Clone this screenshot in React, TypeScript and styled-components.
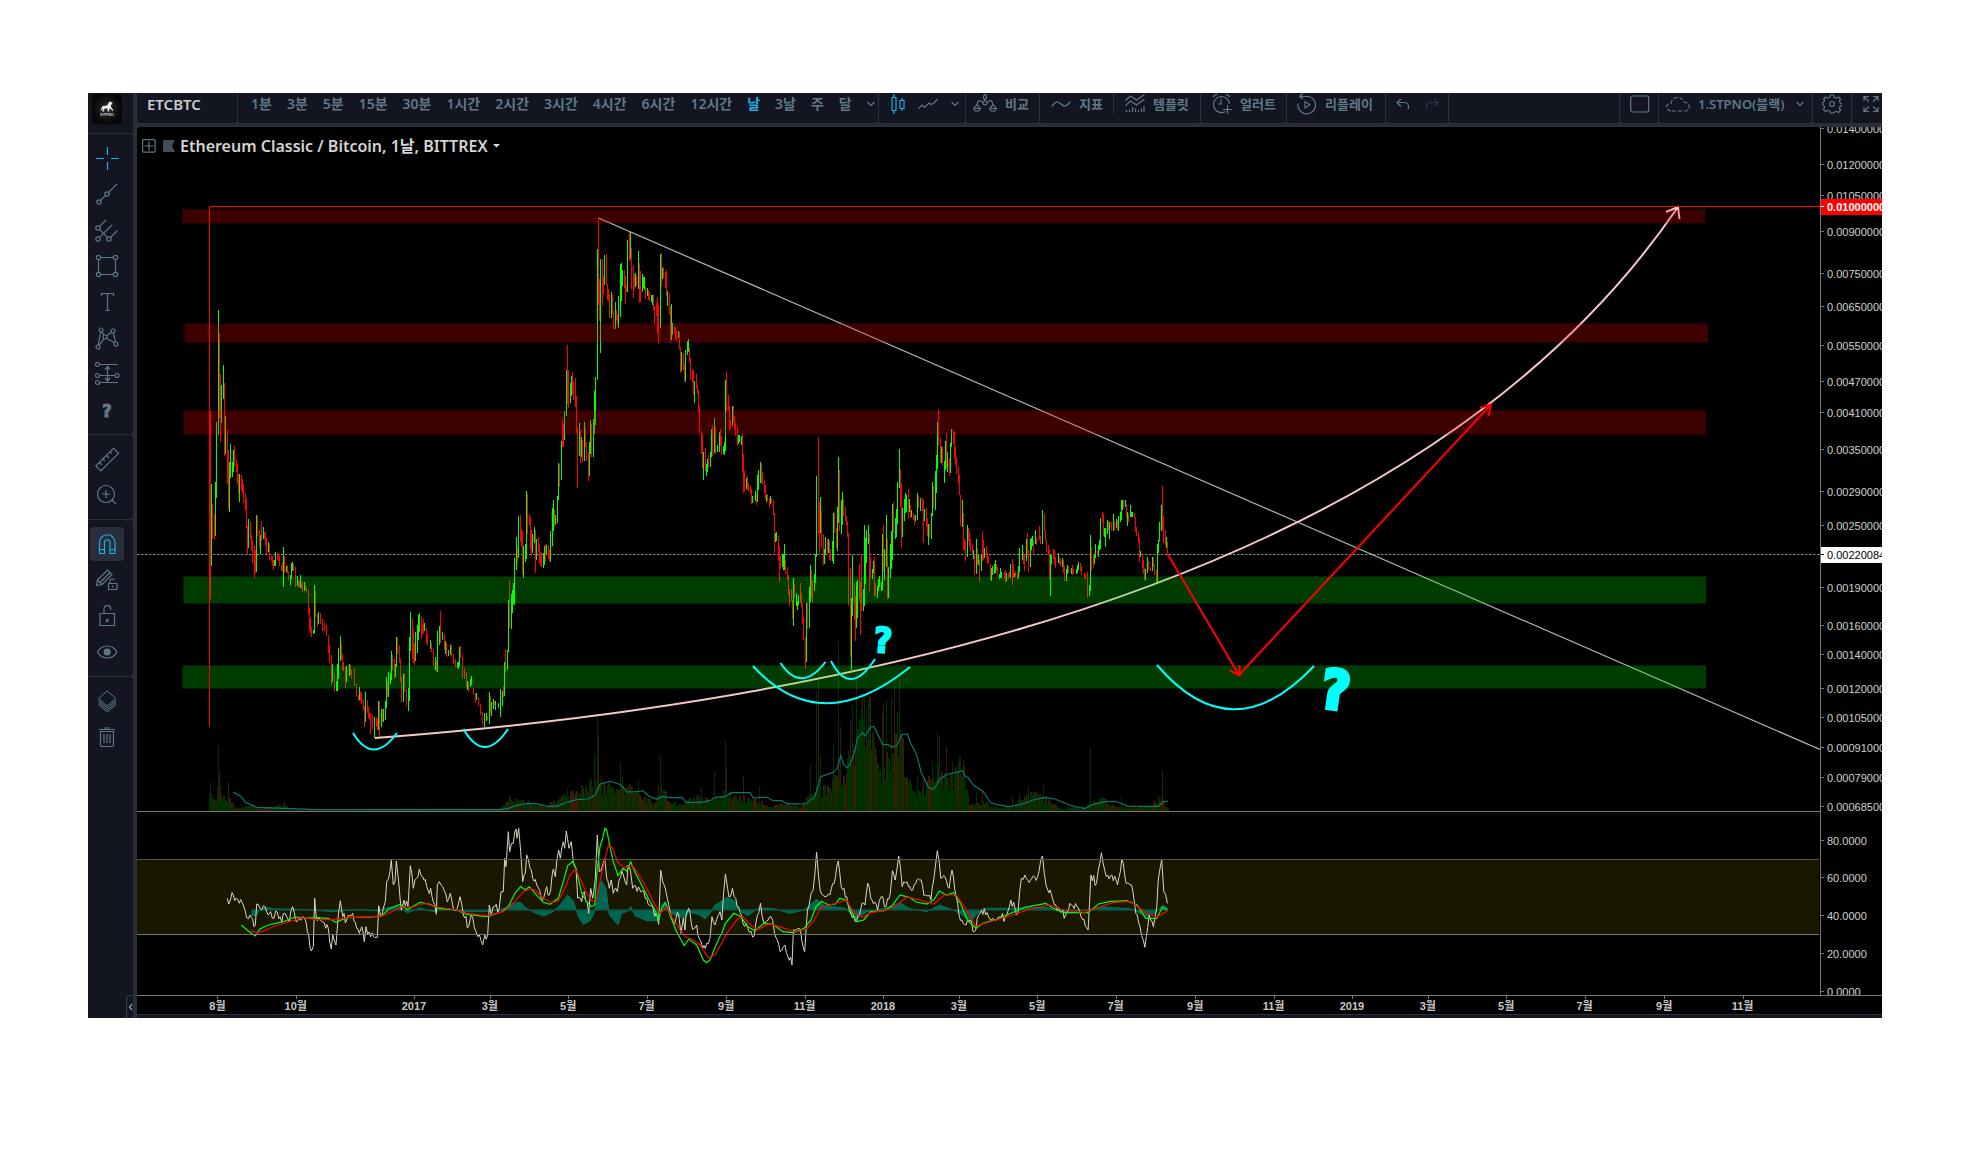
import React from "react";
import styled, { createGlobalStyle } from "styled-components";

const ink = "#5f7888";
const line = "#2a2d3a";
const panel = "#131620";
const accent = "#1caee4";
const uiFont = `"Noto Sans", "Noto Sans CJK KR", sans-serif`;
const axisFont = `"Liberation Sans", "Noto Sans CJK KR", sans-serif`;
const markFont = `"DejaVu Sans Condensed", "DejaVu Sans", sans-serif`;

const GlobalStyle = createGlobalStyle`
  body { margin: 0; background: #fff; font-family: ${uiFont}; }
  *, *::before, *::after { box-sizing: border-box; }
  button, input { font: inherit; color: inherit; border: 0; background: none; padding: 0; margin: 0; }
  button { cursor: pointer; }
`;

const Page = styled.div`
  padding: 93px 89px 151px 88px;
`;

const Terminal = styled.div`
  display: grid;
  grid-template-columns: 45px minmax(0, 1fr);
  column-gap: 4px;
  background: ${line};
  overflow: hidden;
`;

const Sidebar = styled.nav`
  display: flex;
  flex-direction: column;
  gap: 1px;
  color: ${ink};
`;

const ToolSection = styled.div<{ $grow?: boolean }>`
  background: ${panel};
  border-radius: 0 3px 3px 0;
  padding: 6px 9px 6px 2px;
  display: flex;
  flex-direction: column;
  align-items: center;
  flex: ${(p) => (p.$grow ? "1" : "none")};
`;

const LogoSection = styled.div`
  background: ${panel};
  height: 40px;
  padding: 1px 4px;
`;

const ToolButton = styled.button<{ $on?: boolean }>`
  width: 34px;
  height: 34px;
  margin: 1px 0;
  border-radius: 4px;
  display: grid;
  place-items: center;
  background: ${(p) => (p.$on ? line : "none")};
  color: ${(p) => (p.$on ? accent : "inherit")};
  font-family: ${markFont};
  font-size: 18px;
  font-weight: 700;
  -webkit-text-stroke: 1px currentColor;
`;

const CollapseRow = styled.div`
  margin: auto -9px 0 0;
  align-self: flex-end;
`;

const CollapseButton = styled.button`
  display: block;
  width: 7px;
  height: 23px;
  border: 1px solid #3a3f4e;
  border-right: 0;
  border-bottom: 0;
  border-radius: 4px 0 0 0;
  color: #8fa3b0;
  line-height: 0;
  margin-bottom: -6px;
`;

const Main = styled.div`
  min-width: 0;
`;

const Toolbar = styled.div`
  display: flex;
  gap: 1px;
  height: 30px;
  margin-bottom: 4px;
  color: ${ink};
  font-size: 14px;
  font-weight: 600;
  line-height: 20px;
`;

const Group = styled.div<{ $width?: number; $gap?: number; $left?: number; $small?: boolean }>`
  flex: ${(p) => (p.$width ? `0 0 ${p.$width}px` : "1")};
  min-width: 0;
  display: flex;
  align-items: center;
  gap: ${(p) => p.$gap ?? 8}px;
  padding: 0 0 9px ${(p) => p.$left ?? 11}px;
  background: ${panel};
  border-radius: 0 0 3px 3px;
  overflow: hidden;
  font-size: ${(p) => (p.$small ? 13 : 14)}px;
`;

const BarButton = styled.button<{ $on?: boolean; $faint?: boolean }>`
  flex: none;
  display: flex;
  align-items: center;
  gap: 8px;
  white-space: nowrap;
  color: ${(p) => (p.$on ? accent : p.$faint ? "#2f3745" : "inherit")};
`;

const Rule = styled.span`
  align-self: stretch;
  width: 1px;
  margin: 0 3px 0 2px;
  background: ${line};
`;

const Symbol = styled.input`
  width: 80px;
  font-size: 15px;
  font-weight: 600;
  color: #c8ccd0;
  outline: 0;
`;

const Chart = styled.section`
  background: #000;
  border-radius: 4px 0 0 0;
  overflow: hidden;
  position: relative;
  display: grid;
  grid-template-columns: minmax(0, 1fr) 62px;
  grid-template-rows: 684px 184px 19px;
`;

const Footer = styled.div`
  height: 3px;
  margin-top: 1px;
  background: ${panel};
`;

const Legend = styled.header`
  position: absolute;
  left: 5px;
  top: 7px;
  display: flex;
  align-items: center;
  gap: 5px;
  color: ${ink};
`;

const Title = styled.h1`
  margin: 0;
  font-size: 16px;
  font-weight: 600;
  line-height: 24px;
  color: #d4d4d4;
`;

const Pane = styled.svg`
  display: block;
  width: 100%;
  height: 100%;
`;

const Scale = styled.div`
  position: relative;
  overflow: hidden;
  border-left: 1px solid #777;
  font: 11px/16px ${axisFont};
  color: #d0d0d0;
`;

const Tick = styled.span<{ $fill?: string; $text?: string }>`
  position: absolute;
  left: 0;
  width: 100px;
  height: 16px;
  margin-top: -8px;
  padding-left: 6px;
  white-space: nowrap;
  background: ${(p) => p.$fill ?? "none"};
  color: ${(p) => p.$text ?? "inherit"};
  font-weight: ${(p) => (p.$text === "#fff" ? 700 : 400)};
  &::before {
    content: "";
    position: absolute;
    left: 0;
    top: 7px;
    width: 3px;
    height: 1px;
    background: ${(p) => p.$text ?? "#777"};
  }
`;

const TimeScale = styled.div`
  position: relative;
  overflow: hidden;
  border-top: 1px solid #777;
  font: 700 11px/16px ${axisFont};
  color: #c8c8c8;
`;

const TimeTick = styled.span`
  position: absolute;
  top: 2px;
  width: 60px;
  margin-left: -30px;
  text-align: center;
  &::before {
    content: "";
    position: absolute;
    left: 30px;
    top: -2px;
    width: 1px;
    height: 3px;
    background: #777;
  }
`;

const Corner = styled.div`
  border-top: 1px solid #777;
`;

/* ---------- icons ---------- */

type IconProps = { w?: number; h?: number; children: React.ReactNode };
const Icon = ({ w = 24, h = 24, children }: IconProps) => (
  <svg width={w} height={h} viewBox={`0 0 ${w} ${h}`} fill="none" stroke="currentColor" strokeWidth="1.2" aria-hidden="true">
    {children}
  </svg>
);
const Chevron = () => (
  <Icon w={8} h={6}><path d="M.5 1 4 4.5 7.500 1" /></Icon>
);

const Logo = () => (
  <svg width="30" height="30" viewBox="0 0 30 30" role="img" aria-label="STPNO" display="block">
    <defs>
      <radialGradient id="glow"><stop offset="0" stopColor="#2c2c2c" /><stop offset="1" stopColor="#060606" /></radialGradient>
    </defs>
    <rect width="30" height="30" rx="3" fill="url(#glow)" />
    <path d="M8.500 17.500 9.500 13.500 11 12 15 11.500 17.500 7.500 20.500 8.500 20 10.500 18.700 10.800 19.300 13.500 21 15.500 20.500 17.500 19.500 15.500 17.500 14.500 17 17.500 15.700 17.500 15.500 14.500 12.500 14.500 12 17.500 10.500 17.500 10.800 14Z" fill="#eee" />
    <text x="15" y="22" textAnchor="middle" fontFamily="Liberation Sans" fontWeight="700" fontSize="4" fill="#ccc">STPNO</text>
  </svg>
);

const tools: { name: string; art: React.ReactNode }[][] = [
  [
    { name: "Crosshair", art: <g stroke={accent}><path d="M12.500 1v8M12.500 16v8M1 12.500h8M16 12.500h8" /></g> },
    { name: "Trend line", art: <><circle cx="4" cy="20" r="2.200" /><circle cx="12" cy="12" r="2.200" /><path d="M5.600 18.400 10.400 13.600M13.600 10.400 22 2" /></> },
    { name: "Pitchfork", art: <><circle cx="3" cy="10" r="2.200" /><circle cx="3" cy="21" r="2.200" /><circle cx="14" cy="21" r="2.200" /><path d="M4.600 8.400 11 2M4.600 19.400 17 7M15.600 19.400 22.500 12.500M4.600 11.600 12.400 19.400" /></> },
    { name: "Shapes", art: <><circle cx="3.500" cy="3.500" r="2.200" /><circle cx="20.500" cy="3.500" r="2.200" /><circle cx="3.500" cy="20.500" r="2.200" /><circle cx="20.500" cy="20.500" r="2.200" /><path d="M5.700 3.500h12.600M5.700 20.500h12.600M3.500 5.700v12.600M20.500 5.700v12.600" /></> },
    { name: "Text", art: <path d="M6.500 6V3.500h12V6M12.500 3.500v17M10 20.500h5" /> },
    { name: "Patterns", art: <><circle cx="6" cy="4" r="2" /><circle cx="18" cy="5" r="2" /><circle cx="10" cy="11" r="2" /><circle cx="3" cy="21" r="2" /><circle cx="21" cy="18" r="2" /><path d="M5.700 6 3.300 19M7 5.800 9.300 9.300M11.600 9.700 16.500 6.300M18.300 7 20.600 16M11.500 12.300 19.500 16.800M9 12.800 4.200 19.300" /></> },
    { name: "Forecast", art: <><circle cx="2.500" cy="2.500" r="2" /><circle cx="2.500" cy="13.500" r="2" /><circle cx="22" cy="13.500" r="2" /><circle cx="2.500" cy="20.500" r="2" /><path d="M4.500 2.500H23M4.500 13.500H20M4.500 20.500H23M12.500 5v13M10 7.500l2.500-3 2.500 3M10 16l2.500 3 2.500-3" /></> },
    { name: "Icons", art: null },
  ],
  [
    { name: "Measure", art: <path d="M.8 19 18.500 1.300l5 5L5.800 24ZM4.500 15.500l2.500 2.500M8 12l1.800 1.800M11.500 8.500 14 11M15 5l1.800 1.800" /> },
    { name: "Zoom", art: <><circle cx="11" cy="11" r="8.500" /><path d="M11 7v8M7 11h8M17 17l4 4" /></> },
  ],
  [
    { name: "Magnet", art: <><path d="M4.500 21.500V10.500a7.700 7.700 0 0 1 15.500 0v11h-5V10.500a2.700 2.700 0 0 0-5.500 0v11Z" /><path d="M4.500 17.500h5M15 17.500h5" /></> },
    { name: "Lock drawing mode", art: <><path d="M1.500 17.500 2.500 12 12.500 2l4.500 4.500-10 10ZM2.500 12l4.500 4.500M5 14.500l10-10" /><path d="M13.500 15.500h8.500v6h-8.500ZM15 15.500v-2.500a2.300 2.300 0 0 1 4.500-.6M17.700 17.500v2" /></> },
    { name: "Lock all", art: <><path d="M5 9.500h14.500v12H5ZM9 9.500V5a3.400 3.400 0 0 1 6.800 0v1" /><path d="M12.200 15v3" strokeWidth="2.500" /></> },
    { name: "Hide all", art: <><path d="M2.500 12C7 4 17.500 4 22 12 17.500 20 7 20 2.500 12Z" /><circle cx="12.200" cy="12" r="3" fill="currentColor" /></> },
  ],
  [
    { name: "Object tree", art: <path d="M12.200 2 21 9.500l-8.800 7.500L3.500 9.500ZM3.500 11.500l8.700 7.500L21 11.500M3.500 13.500l8.700 7.500L21 13.500M3.500 15.500l8.700 7.500L21 15.500" strokeWidth="1" /> },
    { name: "Remove", art: <path d="M4 4.500h16M9 3h6M5.500 6.500h13v13.500q0 1.500-1.500 1.500H7q-1.500 0-1.500-1.500ZM9 9v9M12 9v9M15 9v9" /> },
  ],
];

const intervals = ["1분", "3분", "5분", "15분", "30분", "1시간", "2시간", "3시간", "4시간", "6시간", "12시간", "날", "3날", "주", "달"];

/* ---------- chart geometry: the drawing space starts at (137, 127) ---------- */

const LEFT = 137;
const WIDTH = 1683;
const priceY = (price: number) => 165 - 234.8 * Math.log((price + 0.0001) / 0.0121) - 127;
const rsiY = (value: number) => 991.6 - 1.8875 * value - 811;
const timeX = (y: number, m: number) => {
  const days = (Date.UTC(y, m - 1, 1) - Date.UTC(2017, 0, 1)) / 86400000;
  return ((414 + days * 1.2849 - LEFT) / WIDTH) * 100;
};

const prices = [0.014, 0.012, 0.0105, 0.009, 0.0075, 0.0065, 0.0055, 0.0047, 0.0041, 0.0035, 0.0029, 0.0025, 0.0019, 0.0016, 0.0014, 0.0012, 0.00105, 0.00091, 0.00079, 0.000685];
const months: [number, number][] = [[2016, 8], [2016, 10], [2017, 1], [2017, 3], [2017, 5], [2017, 7], [2017, 9], [2017, 11], [2018, 1], [2018, 3], [2018, 5], [2018, 7], [2018, 9], [2018, 11], [2019, 1], [2019, 3], [2019, 5], [2019, 7], [2019, 9], [2019, 11]];

const barsA = `r82 590 1000,r85 590 1117,g88 795 1025,r91 851 948,r96 878 952,g99 790 941,g102 622 834,g107 308 658,r110 372 610,r113 487 678,g116 518 624,g121 462 557,r124 512 717,g127 604 711,r132 644 795,r135 700 865,g138 734 874,g141 683 778,g147 734 776,g150 700 762,r153 689 748,r158 725 762,r161 739 795,r164 767 823,g167 767 846,r172 770 815,r175 781 820,r178 795 848,r183 820 867,r186 834 918,r189 912 991,g192 893 974,r197 899 949,r200 938 980,r203 952 1016,r208 966 1057,r211 980 1044,g214 882 1042,r217 885 941,r222 924 975,g225 938 991,r228 899 955,g234 916 949,r237 930 948,r239 930 969,r242 947 991,g248 958 985,r251 963 1008,r256 997 1010,r259 997 1025,r262 1008 1036,g264 1008 1025,g267 986 1025,r273 988 1008,r276 988 1010,r278 997 1025,r284 1022 1038,r287 1014 1040,g290 972 1083,r293 997 1044,g298 1025 1041,r301 1022 1047,r304 1038 1063,g309 1050 1078,g312 1016 1061,g315 1014 1040,r318 1019 1039,r324 1028 1083,g329 1053 1080,r332 1067 1083,r334 1064 1083,g337 1050 1086,r340 1072 1089,r343 1067 1097,g348 1069 1095,r351 1078 1092,r354 1083 1100,r360 1092 1158,r363 1142 1204,r366 1170 1212,r368 1195 1223,g373 1205 1215,g376 1078 1212,r379 1095 1167,r385 1159 1195,g388 1154 1187,r393 1156 1187,r399 1173 1207,r404 1184 1207,r410 1190 1221,r415 1217 1268,r418 1246 1296,r424 1274 1358,g427 1299 1350,r432 1324 1378,g438 1347 1375,g441 1299 1374,g443 1254 1341,g449 1221 1291,r452 1240 1288,r455 1272 1316,r457 1294 1319,r463 1308 1366,g466 1305 1350,g474 1299 1333,r477 1302 1330,r480 1316 1341,r488 1310 1361,r494 1355 1392,r499 1386 1403,g502 1364 1400,r505 1375 1403,r508 1380 1411,r513 1397 1428,r516 1417 1476,g519 1378 1462,r525 1400 1437,r527 1420 1450,r530 1437 1456,r533 1436 1495,r539 1442 1481,g544 1448 1507,r550 1448 1476,r553 1453 1484,g556 1403 1484,r558 1403 1507,g564 1425 1476,r567 1425 1462,g570 1425 1462,g575 1403 1456,g578 1336 1422,r581 1347 1392,g584 1322 1392,g589 1324 1355,g592 1263 1344,r595 1274 1316,r600 1285 1341,g603 1299 1336,g606 1224 1308,r609 1224 1272,r614 1246 1296,r617 1285 1350,r620 1336 1406,g626 1327 1406,r629 1324 1378,r634 1370 1417,g640 1366 1431,g642 1224 1403,g645 1154 1263,r651 1173 1285,r654 1201 1296,r656 1240 1302,g659 1210 1291,g665 1190 1268,g668 1162 1232,g670 1156 1210,r676 1165 1229,r679 1187 1217,r682 1173 1212,g685 1184 1207,r690 1198 1240,r693 1215 1246,g701 1232 1257,r704 1240 1266,r710 1257 1305,g715 1280 1316,r718 1288 1322,g721 1207 1322,g726 1193 1246,r729 1151 1240,g735 1210 1232,r740 1215 1260,g743 1235 1270,r746 1240 1280,g751 1260 1277,g757 1246 1274,r760 1243 1280,r765 1270 1299,r771 1285 1308,g777 1294 1310,g780 1294 1313,g782 1252 1305,r785 1249 1282,r791 1274 1338,r796 1310 1341,r802 1322 1364,g805 1347 1372,r808 1350 1378,g813 1341 1364,g816 1333 1358,r822 1366 1386,r827 1380 1408,g830 1380 1400,r836 1392 1417,r841 1411 1442,r847 1434 1470,g853 1436 1476,g858 1437 1458,r861 1444 1456,g867 1378 1467,r870 1389 1437,g872 1406 1445,g878 1397 1425,r881 1403 1414,g884 1403 1428,g892 1408 1422,g898 1369 1448,g903 1375 1417,r906 1361 1392,g909 1294 1389,r912 1257 1322,g917 1260 1316,g920 1120 1266,r922 1064 1198,g928 1103 1201,g931 1092 1156,g934 1072 1131,g937 1002 1134,g943 944 1036,r946 972 1016,g948 885 1002,r954 882 958,r957 921 972,r959 927 1050,g962 969 1058,g968 963 1013,g970 815 1005,r973 823 935,r979 879 910,r982 888 980,r985 924 997,g987 935 988,g993 916 960,r996 924 1044,g999 950 1008,r1004 944 985,r1007 963 1016,r1010 986 1025,r1013 988 1027,g1018 988 1030,g1021 969 1022,r1024 963 1010,g1027 966 991,r1032 966 1005,r1035 980 1010,g1038 927 1014,g1043 862 969,g1046 840 927,r1049 865 916,g1052 882 910,g1057 829 904,g1060 736 840,r1063 739 804,g1069 675 784,r1071 613 692,r1074 627 692,g1077 590 672,g1083 476 605,r1085 406 571,r1088 476 582,g1094 512 568,g1096 493 549,r1099 482 543,r1102 510 560,r1107 498 580,r1110 549 652,r1113 638 806,g1119 624 717,r1122 644 736,g1124 664 720,r1127 672 734,g1132 622 731,r1135 638 692,r1138 678 731,r1144 706 787,g1147 678 773,g1150 616 711,r1153 627 720,g1158 613 720,g1161 535 655,g1164 496 630,g1169 137 504,r1172 50 294,r1174 221 339,g1177 165 428,r1183 165 294,r1186 212 263,g1189 154 238,r1194 151 238,r1197 235 280,r1200 249 283,r1203 263 330,g1208 258 330,r1211 266 319,r1214 311 361,g1219 286 361,r1222 308 336,r1225 322 350,g1228 269 358,g1233 179 328,g1236 176 283,g1239 196 241,r1245 196 246,r1248 212 291,r1250 238 258,g1253 112 258,r1259 90 171,g1262 90 165,r1264 134 249,r1270 182 274,r1273 207 249,g1276 204 244,r1278 212 241,g1284 143 249,r1287 176 288,r1290 199 286,g1295 207 258,g1298 215 246,g1300 216 252,r1304 241 277,g1309 246 269,r1312 252 280,r1315 258 283,g1320 266 286,g1323 266 294,r1326 266 308,r1329 297 347,r1334 288 325,r1337 272 372,r1340 294 400,g1345 151 358,r1348 148 244,g1351 190 221,r1354 188 218,r1360 202 246,r1362 196 269,g1365 255 297,r1371 260 322,r1374 297 400,g1377 291 392,g1379 344 378,r1385 353 372,r1388 358 389,r1391 367 395,g1396 367 386,r1399 370 417,r1402 412 484,g1405 425 479,r1410 428 476,r1413 459 507,g1416 420 510,g1421 395 434,g1424 389 426,r1427 414 454,r1430 442 504,r1435 473 510,r1438 479 546,g1441 507 568,r1446 487 526,r1449 518 543,r1452 532 594,r1455 577 652,r1460 647 711,r1463 655 750,g1466 706 784,r1472 694 759,g1474 739 773,g1477 725 762,r1480 714 750,g1486 706 748,g1489 641 720,r1491 630 717,g1497 610 708,r1500 636 711,g1505 686 706,g1511 650 706,r1514 641 689,r1517 661 714,g1522 689 711,g1525 678 714,g1528 504 703,r1531 482 594,r1536 546 588,r1539 577 644,r1542 616 641,g1547 577 633,r1550 577 622,r1553 605 641,r1556 624 661,r1561 636 689,g1565 658 683`;

const barsB = `r112 230 288,g115 255 283,g118 255 277,g124 258 285,r127 252 366,r130 312 430,r133 363 424,g139 384 418,r142 378 421,r145 399 423,r151 408 432,r154 418 462,g157 438 459,g166 423 453,r169 432 465,g172 375 456,g175 360 420,g181 336 400,r184 342 403,r187 366 403,r193 393 430,r196 405 447,g199 435 456,r202 432 454,r208 444 474,g211 438 462,r214 444 460,r220 450 495,r223 489 609,g226 549 576,g229 546 573,r235 558 630,r238 591 696,r241 618 656,g247 612 651,g250 612 660,g253 582 660,r256 630 672,r262 651 690,r265 675 736,r268 717 768,r274 718 754,r277 750 807,g280 684 828,r283 702 745,g289 729 768,g292 753 780,g295 735 765,r301 699 760,r304 730 771,r307 759 822,r310 800 870,r316 861 957,g319 759 936,r322 757 837,g328 711 834,g331 645 757,r334 660 745,r337 690 759,g343 672 723,g346 612 699,g349 378 621,r355 261 555,r358 456 612,g361 441 549,r364 483 594,r370 552 645,g373 597 642,g376 561 612,r382 567 608,g385 567 609,r388 573 631,r391 597 634,g397 573 633,g400 489 642,r403 486 550,r409 534 594,g412 471 603,g415 321 519,r418 360 543,g424 450 552,g427 426 525,r430 447 498,r436 471 514,r439 498 526,r442 516 561,r445 549 768,r451 654 921,g454 744 960,g457 615 798,r463 699 810,r466 738 873,g469 696 834,g472 690 804,r478 642 748,r481 696 855,r484 612 784,g490 717 783,g493 525 768,g496 564 702,g499 540 640,g505 525 582,r508 552 723,r511 621 684,g517 657 687,g520 633 669,r523 621 738,r526 699 737,g532 708 744,g535 687 723,g538 678 711,g544 696 723,g547 552 720,r550 525 666,g553 597 690,g559 495 652,r562 567 747,g565 651 744,g571 582 684,g574 543 657,g577 462 631,r580 456 546,g586 504 567,g589 477 561,g592 396 522,g598 297 414,r601 357 471,r604 402 594,g607 474 561,g613 447 513,g616 429 489,g619 435 486,r625 417 508,g628 447 486,r631 466 504,g634 480 501,r640 489 510,r643 495 526,g646 496 513,g652 429 510,r655 438 474,g661 444 484,r667 444 484,r670 450 579,g673 477 513,r679 474 531,r682 504 558,g685 522 585,r688 522 562,g694 489 567,g697 396 498,r700 408 474,g706 363 480,g709 315 430,g712 216 357,r715 180 285,r721 264 340,g724 291 339,r727 288 345,g733 333 399,g736 273 361,r739 249 354,g742 306 366,r748 324 378,g751 279 369,g754 237 291,r760 240 282,r763 246 324,r766 291 345,r769 321 372,r775 348 399,r778 375 436,r781 435 528,g787 450 531,r790 489 600,r793 567 600,r796 573 633,g802 525 621,r805 534 572,r808 543 590,r811 567 606,r817 582 616,g820 600 627,r823 612 675,g829 567 672,r832 594 646,g835 612 645,r838 630 696,g844 612 662,r847 543 633,r850 570 630,g853 594 624,r859 588 621,r862 609 640,r865 621 642,r871 642 690,g874 654 693,g877 648 676,g883 642 672,g886 630 669,r889 642 663,r892 651 682,g898 672 687,g901 654 684,g904 666 684,r913 666 687,r916 660 699,g919 669 693,r925 669 687,r928 666 681,g931 642 684,r937 627 705,r940 642 684,g943 669 681,r946 663 681,r952 666 690,g955 648 684,g958 594 667,g967 585 630,r970 606 642,r973 612 663,g979 567 633,r982 549 621,r985 600 666,g991 567 651,g994 564 600,g997 558 589,r1000 570 612,g1006 540 583,r1009 564 586,r1018 528 570,r1021 558 582,g1027 480 582,r1033 492 543,r1036 540 573,r1039 570 606,r1045 586 615,r1048 600 690,g1051 612 738,g1054 615 642,r1060 597 627,r1063 600 645,r1066 621 655,g1075 609 640,r1078 621 642,r1081 627 648,g1087 624 651,r1090 630 669,r1093 648 693,g1099 657 693,g1102 645 672,r1105 648 670,g1114 654 672,r1117 645 675,r1120 657 673,g1129 657 672,g1132 645 669,g1135 636 660,r1141 639 664,r1144 648 676,r1153 669 684,r1156 672 687,r1162 666 744,g1168 705 738,g1171 555 723,r1174 591 664,r1180 612 655,g1183 615 642,g1186 582 624,r1192 600 615,g1195 585 621,g1198 570 600,g1201 504 598,r1207 486 516,r1210 492 558,g1213 534 561,g1216 534 591,g1222 510 552,r1225 513 540,g1228 516 567,r1234 516 543,g1240 492 543,r1243 513 540,g1249 507 534,r1252 510 540,g1255 498 543,g1261 486 516,g1264 450 510,g1267 450 480,r1270 450 474,g1276 450 472,r1279 462 504,g1282 486 528,r1285 492 515,g1291 465 501,g1294 486 500,g1297 486 502,r1303 489 504,r1306 501 546,r1309 531 558,r1315 546 580,r1318 564 636,g1321 603 621,r1327 612 654,r1330 630 672,r1333 654 693,g1336 657 690,g1342 621 669,r1345 633 660,r1351 651 663,g1357 621 663,r1360 621 650,r1363 642 675,r1369 660 698,g1372 582 696,g1375 570 609,g1378 516 573,g1384 465 544,r1387 408 540,r1390 498 579,r1396 540 585,g1399 561 594,r1402 576 612`;

type Frame = [ox: number, oy: number, sx: number, sy: number];
const frameA: Frame = [180, 200, 2.8, 2.8];
const frameB: Frame = [700, 350, 3, 3];
const frameC: Frame = [200, 735, 3, 3];
const frameD: Frame = [120, 800, 1.4255, 3];

const barPath = (kind: string) =>
  ([[barsA, frameA], [barsB, frameB]] as [string, Frame][])
    .map(([src, [ox, oy, sx, sy]]) =>
      src.split(",").filter((b) => b[0] === kind).map((b) => {
        const [x, t, d] = b.slice(1).split(" ").map(Number);
        return `M${Math.floor(ox + x / sx)} ${Math.round(oy + t / sy)}h1V${Math.round(oy + d / sy)}h-1Z`;
      }).join(""),
    ).join("");

type Point = [number, number];
const points = (src: string, [ox, oy, sx, sy]: Frame): Point[] =>
  src.trim().split(" ").map((p) => {
    const [x, y] = p.split(",").map(Number);
    return [ox + x / sx, oy + y / sy];
  });
const join = (list: Point[]) => list.map(([x, y]) => `${x.toFixed(1)},${y.toFixed(1)}`).join(" ");

/* small repeatable wobble, so that a sparse series keeps its daily texture */
const noise = (n: number) => {
  const v = Math.sin(n * 127.1 + 11.7) * 43758.5453;
  return v - Math.floor(v);
};
const roughen = (list: Point[], amount: number): Point[] => {
  const out: Point[] = [];
  list.forEach(([x, y], i) => {
    out.push([x, y]);
    const next = list[i + 1];
    if (!next) return;
    const steps = Math.floor((next[0] - x) / 1.285);
    for (let k = 1; k < steps; k++) {
      const t = k / steps;
      out.push([x + (next[0] - x) * t, y + (next[1] - y) * t + (noise(x + k) - 0.5) * amount]);
    }
  });
  return out;
};

const volumeAverage = [
  ...points("100,172 124,185 136,202 170,217 250,220 330,223 600,224 900,224 925,220 950,212 985,205 1010,206 1040,214 1070,214 1100,202 1130,194 1165,192 1185,180 1200,148 1230,139 1262,149 1280,171 1305,170 1330,168 1345,182 1370,193 1385,185 1410,188 1445,187 1460,202 1498,202", frameC),
  ...points("0,1357 30,1352 45,1342 75,1340 95,1328 150,1328 160,1344 200,1342 220,1352 245,1352 260,1361 318,1362 345,1340 362,1280 400,1267 412,1255 422,1217 432,1245 442,1253 452,1240 465,1200 472,1165 488,1148 495,1158 512,1130 522,1130 548,1184 565,1184 575,1192 590,1187 605,1154 622,1152 632,1180 650,1215 663,1265 685,1312 700,1318 712,1302 720,1286 745,1272 765,1268 787,1262 795,1278 805,1284 820,1305 850,1325 873,1360 925,1370 960,1364 1000,1350 1035,1342 1065,1347 1110,1366 1155,1376 1175,1364 1215,1355 1245,1354 1285,1369 1375,1369 1392,1354 1404,1354", frameB),
];

const rsi = roughen([
  ...points("82,490 86,507 92,492 100,480 108,490 118,505 130,510 140,548 150,540 166,570 170,507 180,520 195,515 205,540 212,530 222,550 232,532 245,560 255,535 268,560 278,515 288,560 300,555 318,560 334,648 340,635 344,490 348,540 365,560 385,580 394,642 398,598 408,630 415,540 421,497 428,545 440,555 458,535 470,580 478,595 485,575 493,620 498,575 512,605 532,607 536,512 542,545 550,520 556,500 560,440 566,430 574,376 580,450 585,440 589,378 596,440 604,525 612,495 624,515 631,392 640,460 650,430 658,402 668,425 684,465 692,460 700,500 709,538 712,450 718,440 728,455 742,500 751,475 760,520 772,520 780,485 790,540 806,575 814,540 828,590 838,598 848,630 854,600 863,600 868,510 874,540 884,515 898,520 903,470 910,470 914,370 918,395 925,290 929,350 940,325 948,282 951,310 956,280 962,350 968,440 976,415 980,360 990,400 998,430 1010,450 1024,492 1040,455 1048,480 1060,402 1066,425 1076,345 1081,370 1090,320 1094,340 1099,288 1107,340 1114,320 1120,380 1128,400 1133,490 1145,500 1153,470 1166,535 1172,460 1178,490 1186,430 1192,300 1198,410 1208,390 1214,370 1220,430 1228,460 1234,435 1240,475 1252,470 1262,425 1270,420 1280,450 1284,390 1291,405 1298,460 1320,465 1340,490 1356,510 1376,568 1382,405 1388,440 1396,460 1402,490 1410,530 1420,560 1436,540 1443,595 1450,550 1455,585 1458,540 1466,520 1474,565 1482,580 1490,570 1498,610 1508,640 1520,625 1530,610 1536,545 1545,570 1560,530", frameC),
  ...points("858,360 863,222 868,290 873,265 880,320 888,370 895,385 904,408 913,310 918,370 928,350 933,400 941,455 948,435 958,495 960,390 968,385 976,455 980,330 985,280 988,270 993,157 998,270 1005,290 1012,285 1020,230 1024,183 1028,260 1036,290 1042,340 1048,365 1056,325 1062,315 1066,250 1072,300 1080,330 1085,290 1092,320 1098,280 1101,212 1105,240 1110,168 1115,260 1122,245 1130,270 1140,240 1148,285 1156,300 1160,240 1165,152 1170,235 1176,230 1182,265 1186,210 1190,270 1196,345 1206,375 1212,360 1218,395 1228,330 1238,350 1250,360 1262,350 1270,300 1280,340 1285,235 1290,225 1298,240 1308,230 1315,168 1320,255 1330,300 1340,335 1348,345 1354,310 1364,320 1380,390 1384,225 1392,250 1399,158 1406,230 1414,225 1422,255 1428,178 1434,250 1442,255 1448,340 1454,380 1461,442 1467,345 1473,380 1478,320 1480,240 1485,180 1488,275 1493,310", frameD),
], 9);

const fast = [
  ...points("124,570 145,588 166,603 180,582 205,570 250,560 285,546 320,549 345,548 385,550 408,562 440,548 520,546 545,542 570,520 602,508 622,524 660,502 690,508 715,520 770,525 800,538 860,545 905,530 925,515 945,475 962,454 975,465 988,455 1005,475 1030,502 1050,508 1075,490 1090,440 1103,392 1118,380 1128,400 1145,475 1160,500 1175,515 1184,510 1190,420 1200,335 1208,310 1215,280 1220,285 1230,335 1240,380 1254,422 1262,410 1270,400 1280,408 1292,380 1305,412 1325,450 1345,490 1365,525 1376,555 1385,520 1396,503 1410,540 1430,590 1453,632 1466,612 1490,630 1510,675 1520,683 1530,675 1540,650 1558,608", frameC),
  ...points("858,400 863,370 875,340 885,350 895,380 905,392 918,370 930,372 945,395 960,398 975,385 985,360 992,320 1000,304 1010,315 1020,312 1026,295 1035,300 1042,330 1050,365 1060,360 1070,335 1090,332 1100,318 1112,285 1125,292 1135,306 1150,312 1160,300 1168,273 1178,285 1188,278 1198,310 1208,360 1220,385 1230,370 1250,358 1270,340 1290,322 1320,310 1330,325 1345,338 1380,338 1395,312 1410,305 1435,302 1450,315 1462,355 1478,355 1486,322 1493,330", frameD),
];

const slow = [
  ...points("154,585 170,594 190,588 220,575 260,562 310,548 350,554 400,554 440,548 520,545 550,542 575,530 605,516 640,516 675,505 710,516 770,525 800,535 860,542 910,530 940,505 970,470 990,461 1005,465 1030,490 1055,503 1075,498 1095,460 1110,420 1126,402 1140,430 1160,475 1175,498 1188,498 1200,440 1215,370 1226,328 1238,340 1252,380 1270,397 1298,393 1310,410 1335,450 1360,500 1380,535 1400,517 1415,545 1440,585 1455,605 1475,612 1500,630 1525,668 1545,660 1558,635", frameC),
  ...points("858,428 865,400 880,358 888,350 900,378 910,388 925,372 940,380 962,396 978,388 988,365 1000,320 1012,315 1036,300 1045,335 1058,352 1070,338 1090,332 1105,318 1122,291 1140,300 1160,312 1175,285 1192,285 1205,325 1220,378 1240,365 1270,347 1300,325 1325,315 1345,330 1375,337 1395,322 1415,308 1440,304 1460,335 1478,352 1493,333", frameD),
];

const spread = [
  ...points("156,525 156,543 170,540 180,523 200,517 220,521 300,523 400,530 480,523 530,528 560,518 600,515 622,534 660,518 700,530 740,522 800,530 860,530 915,520 930,508 960,502 980,520 1000,532 1030,543 1060,530 1080,510 1103,480 1120,498 1135,545 1150,568 1170,558 1184,530 1195,460 1204,437 1218,460 1228,540 1254,570 1265,535 1280,530 1293,515 1305,542 1340,557 1376,557 1385,510 1396,500 1410,535 1440,545 1455,552 1466,530 1500,540 1515,552 1530,535 1545,510 1560,502", frameC),
  ...points("860,300 865,292 875,300 885,335 895,347 910,325 930,325 955,340 975,330 993,298 1005,318 1025,322 1035,325 1048,360 1065,335 1090,325 1112,308 1125,325 1150,335 1168,315 1185,328 1198,340 1212,365 1230,325 1270,325 1320,322 1345,335 1380,330 1400,320 1440,326 1462,348 1475,340 1487,315 1493,325 1493,330", frameD),
];

/* volume: an envelope (x, height) filled in daily, and the days that stand out */
const envelope: Point[] = [[209, 14], [214, 10], [222, 16], [232, 9], [236, 3], [250, 5], [262, 2], [276, 5], [284, 8], [290, 1], [400, 1], [500, 2], [508, 12], [530, 8], [545, 4], [560, 14], [575, 18], [588, 26], [602, 30], [614, 22], [628, 24], [640, 14], [655, 8], [662, 20], [672, 10], [682, 5], [690, 15], [705, 12], [725, 18], [740, 14], [755, 12], [770, 4], [785, 8], [800, 5], [815, 22], [830, 26], [845, 42], [855, 80], [870, 96], [880, 34], [895, 76], [905, 58], [912, 18], [925, 22], [935, 42], [950, 36], [962, 48], [969, 6], [985, 9], [992, 4], [1010, 4], [1022, 12], [1034, 18], [1050, 9], [1060, 3], [1085, 4], [1092, 9], [1104, 12], [1115, 4], [1135, 3], [1150, 5], [1160, 12], [1169, 2]];
const spikes = `r210 28,g211 17,g217 24,g218 65,r219 38,r220 25,r228 29,r510 15,g528 12,g567 22,g590 34,g594 57,g597 94,r598 76,g601 35,g620 49,g622 33,g628 25,g638 32,r658 25,g660 55,g661 25,r701 23,g714 39,g725 70,r726 43,r743 35,g759 25,g810 46,g816 120,r818 146,g820 55,g833 66,g838 170,r840 84,r848 60,r850 92,g852 106,g856 137,g859 93,r862 118,g864 116,g866 102,g869 80,g882 97,r883 106,g886 111,g891 113,r894 125,g897 100,g899 132,g901 65,g917 35,r923 32,g932 50,g937 79,r939 74,r946 64,g952 49,r960 49,r963 51,r967 22,g976 19,r982 19,r1012 14,g1019 17,r1028 24,g1035 20,g1043 26,g1090 64,g1102 14,g1121 15,g1158 15,r1162 41,r1163 12`;
const volumePath = (kind: string) => {
  let d = "";
  for (let i = 0, x = 209; x < 1168; i++, x = 209 + i * 1.285) {
    if ((noise(i) > 0.5 ? "g" : "r") !== kind) continue;
    const k = envelope.findIndex((p) => p[0] > x);
    const [x0, h0] = envelope[k - 1];
    const [x1, h1] = envelope[k];
    const h = Math.round((h0 + ((h1 - h0) * (x - x0)) / (x1 - x0)) * (0.55 + 0.65 * noise(i * 3 + 1)));
    if (h > 0) d += `M${Math.floor(x)} 811v-${h}h2v${h}Z`;
  }
  spikes.split(",").filter((s) => s[0] === kind).forEach((s) => {
    const [x, h] = s.slice(1).split(" ");
    d += `M${x} 811v-${h}h1v${h}Z`;
  });
  return d;
};

const PricePane = () => (
  <Pane viewBox="137 127 1683 684" preserveAspectRatio="none" role="img" aria-label="ETCBTC price">
    <path d={volumePath("r")} fill="#3a1d00" shapeRendering="crispEdges" />
    <path d={volumePath("g")} fill="#003000" shapeRendering="crispEdges" />
    <polyline points={join(volumeAverage)} fill="none" stroke="#087872" strokeWidth="1.2" />
    <path d="M137 554.500H1820" stroke="#888" strokeDasharray="2.500 1.500" />
    <path d={barPath("r")} fill="#f00" shapeRendering="crispEdges" />
    <path d={barPath("g")} fill="#0f0" shapeRendering="crispEdges" />
    <path d="M598.500 218 1820 749.500" stroke="#b5b5b5" strokeWidth="1.200" />
    <path d="M375 738Q1366 663 1678 207M1666 212 1678 207 1679.500 219" fill="none" stroke="#f8c8c8" strokeWidth="2" />
    <g fill="#f00" fillOpacity=".235">
      <path d="M182.500 209.500H1705V223.500H182.500ZM184.500 323.500H1708V342.500H184.500ZM183.500 410.500H1706V434.500H183.500Z" />
    </g>
    <path d="M183.500 576.500H1706V603.500H183.500ZM182.500 665.500H1706V688.500H182.500Z" fill="#0f0" fillOpacity=".235" />
    <path d="M207.500 727V206.500" stroke="none" />
    <path d="M209.500 727V206.500H1820" fill="none" stroke="#f00" />
    <g fill="none" stroke="#f00" strokeWidth="2">
      <path d="M1167 553 1239 675 1491 404.500M1230 670.500 1239.500 675.500 1239.500 665M1480 408 1491 404.500 1488.500 416" />
    </g>
    <g fill="none" stroke="#0ff" strokeWidth="2">
      <path d="M353 733Q373 766 397 733M463.500 729Q484 765 508 729M780.500 663Q801 694 825.500 662M831 661Q850 698 875 659M753 666Q820 740 910 667M1157 665Q1232 753 1314 666" />
    </g>
    <g fill="#0ff" stroke="#0ff" fontFamily={markFont} fontWeight="700">
      <text fontSize="35" strokeWidth="2" transform="translate(873 652) rotate(4)">?</text>
      <text fontSize="54" strokeWidth="4" transform="translate(1319 707) rotate(8)">?</text>
    </g>
  </Pane>
);

const RsiPane = () => (
  <Pane viewBox="137 811 1683 184" preserveAspectRatio="none" role="img" aria-label="RSI">
    <path d="M137 812H1820V817H137Z" fill="#060606" />
    <path d="M137 859.500H1819V934.500H137Z" fill="#1a1700" />
    <polygon points={join(spread)} fill="#00664f" stroke="#007a68" strokeWidth=".8" />
    <path d="M252 910H1168" stroke="#10443a" />
    <polyline points={join(rsi)} fill="none" stroke="#d8d6c0" strokeWidth="1" />
    <polyline points={join(fast)} fill="none" stroke="#0f0" strokeWidth="1.200" />
    <polyline points={join(slow)} fill="none" stroke="#f00" strokeWidth="1.200" />
    <path d="M137 859.500H1819" stroke="#55544a" />
    <path d="M137 934.500H1819" stroke="#77766a" />
    <path d="M137 811.500H1820" stroke="#777" />
  </Pane>
);

export default function App() {
  return (
    <>
      <GlobalStyle />
      <Page>
        <Terminal>
          <Sidebar aria-label="Drawing tools">
            <LogoSection><Logo /></LogoSection>
            {tools.map((section, i) => (
              <ToolSection key={i} $grow={i === tools.length - 1}>
                {section.map((tool) => (
                  <ToolButton key={tool.name} aria-label={tool.name} $on={tool.name === "Magnet"}>
                    {tool.art ? <Icon w={25} h={25}>{tool.art}</Icon> : "?"}
                  </ToolButton>
                ))}
                {i === tools.length - 1 && (
                  <CollapseRow>
                    <CollapseButton aria-label="Collapse">
                      <Icon w={5} h={8}><path d="M4 1 1.500 4 4 7" /></Icon>
                    </CollapseButton>
                  </CollapseRow>
                )}
              </ToolSection>
            ))}
          </Sidebar>
          <Main>
            <Toolbar>
              <Group $width={100} $left={10}><Symbol aria-label="Symbol" defaultValue="ETCBTC" /></Group>
              <Group $width={640} $gap={15} $left={13}>
                {intervals.map((label) => <BarButton key={label} $on={label === "날"}>{label}</BarButton>)}
                <BarButton aria-label="More intervals"><Chevron /></BarButton>
              </Group>
              <Group $width={86} $gap={13} $left={12}>
                <BarButton $on aria-label="Candles"><Icon w={14} h={20}><path d="M1 3.500h4v13H1ZM3 0v3.500M3 16.500V20M9 6.500h4v8H9ZM11 4v2.500M11 14.500V17" /></Icon></BarButton>
                <BarButton aria-label="Line style"><Icon w={20} h={12}><path d="M.5 10.500 4 7l2.500 2.500L11 5l2 1.500L16 5l3.500-4" /></Icon></BarButton>
                <BarButton aria-label="More styles"><Chevron /></BarButton>
              </Group>
              <Group $small $width={73} $left={7}>
                <BarButton><Icon w={24} h={20}><ellipse cx="12" cy="3" rx="1.500" ry="2.300" /><circle cx="12" cy="9" r="2" /><path d="M12 5v2M10 9C7 4.500 4.500 7 4 10.500M14 9C17 4.500 19.500 7 20 10.500M1 14.500h6.500M16.500 14.500H23" /><path d="M4 10.500.800 14.500a3.300 3.300 0 0 0 6.500 0ZM20 10.500l-3.300 4a3.300 3.300 0 0 0 6.500 0Z" /></Icon>비교</BarButton>
              </Group>
              <Group $small $width={160}>
                <BarButton><Icon w={20} h={8}><path d="M.5 6.500C5 1 7 1 10 4s5 3 9.500-2.500" /></Icon>지표</BarButton>
                <Rule />
                <BarButton><Icon w={20} h={20}><path d="M.5 6.500 5.500 2l6 4 8-5.500M.5 11.500l5-4.500 6 4 8-6M1.500 16v2M4.500 15.500V18M7.500 13v5M10.500 14.500V18M13.500 16v2M16.500 14.500V18M19 12v6" /></Icon>템플릿</BarButton>
              </Group>
              <Group $small $width={85}>
                <BarButton><Icon w={20} h={22}><path d="M13.500 18.500A8 8 0 1 1 17.500 11M9 6v5H6M.5 4 5 1M14 1l4 3M15.500 12v9M11 16.500h9" /></Icon>얼러트</BarButton>
              </Group>
              <Group $small $width={98} $left={10}>
                <BarButton><Icon w={20} h={22}><path d="M4 3.500h8A8.800 8.800 0 1 1 1 10.500M6 .5 2.500 3.500 6 6M8 8.500v6.500l5-3.300Z" /></Icon>리플레이</BarButton>
              </Group>
              <Group $width={62} $gap={15} $left={10}>
                <BarButton aria-label="Undo"><Icon w={14} h={12}><path d="M5 1 1 4.500l4 4M1 4.500h7.500a4 4 0 0 1 4 4V11" /></Icon></BarButton>
                <BarButton $faint aria-label="Redo"><Icon w={14} h={12}><path d="M9 1l4 3.500-4 4M13 4.500H5.500a4 4 0 0 0-4 4V11" /></Icon></BarButton>
              </Group>
              <Group />
              <Group $width={38} $left={10}>
                <BarButton aria-label="Layout"><Icon w={20} h={18}><rect x=".7" y="1" width="18" height="16" rx="2" /></Icon></BarButton>
              </Group>
              <Group $small $gap={12} $width={153} $left={7}>
                <BarButton>
                  <Icon w={24} h={18}><path strokeDasharray="4 2" d="M5 16C-1 15-.5 8 5 8.500 6 1 16 0 17.500 7 23 7 26 14 20 16Z" /></Icon>
                  1.STPNO(블랙)
                </BarButton>
                <BarButton aria-label="Layouts"><Chevron /></BarButton>
              </Group>
              <Group $width={38} $left={9}>
                <BarButton aria-label="Settings"><Icon w={20} h={20}><circle cx="10" cy="10" r="2.500" /><path d="M8.500 1h3l.7 2.300 2.200.9 2.100-1.200 2 2-1.100 2.200.9 2.100 1.700.2v2l-1.700.7-.9 2.100 1.100 2.200-2 2-2.100-1.200-2.200.9L11.500 19h-3l-.7-1.800-2.200-.9-2.100 1.200-2-2 1.100-2.200-.9-2.100L.5 11V9l1.200-.7.9-2.100L1.500 5l2-2 2.100 1.200 2.200-.9Z" /></Icon></BarButton>
              </Group>
              <Group $width={30}>
                <BarButton aria-label="Full screen"><Icon w={16} h={18}><path d="M1 6V1.500h5M1 1.500l5 5M10 1.500h5V6M15 1.500l-5 5M1 12v4.500h5M1 16.500l5-5M15 12v4.500h-5M15 16.500l-5-5" /></Icon></BarButton>
              </Group>
            </Toolbar>
            <Chart>
              <PricePane />
              <Scale>
                {prices.map((p) => <Tick key={p} style={{ top: Math.round(priceY(p)) }}>{p.toFixed(8)}</Tick>)}
                <Tick $fill="#f00" $text="#fff" style={{ top: Math.round(priceY(0.01)) }}>0.01000000</Tick>
                <Tick $fill="#fff" $text="#000" style={{ top: Math.round(priceY(0.00220084)) }}>0.00220084</Tick>
              </Scale>
              <RsiPane />
              <Scale>
                {[80, 60, 40, 20, 0].map((v) => <Tick key={v} style={{ top: Math.round(rsiY(v)) }}>{v.toFixed(4)}</Tick>)}
              </Scale>
              <TimeScale>
                {months.map(([y, m]) => (
                  <TimeTick key={`${y}-${m}`} style={{ left: `${timeX(y, m)}%` }}>{m === 1 ? y : `${m}월`}</TimeTick>
                ))}
              </TimeScale>
              <Corner />
              <Legend>
                <Icon w={14} h={14}><rect x=".6" y=".6" width="12.500" height="12.500" rx="1" /><path d="M7 2.500v9M2.500 7h9" /></Icon>
                <Icon w={14} h={14}><path d="M2 1h12l-3 6 3 6H2Z" fill="#434c59" stroke="none" /></Icon>
                <Title>Ethereum Classic / Bitcoin, 1날, BITTREX</Title>
                <Icon w={8} h={6}><path d="M0 1h7L3.500 4.500Z" fill="#dcdcdc" stroke="none" /></Icon>
              </Legend>
            </Chart>
            <Footer />
          </Main>
        </Terminal>
      </Page>
    </>
  );
}
